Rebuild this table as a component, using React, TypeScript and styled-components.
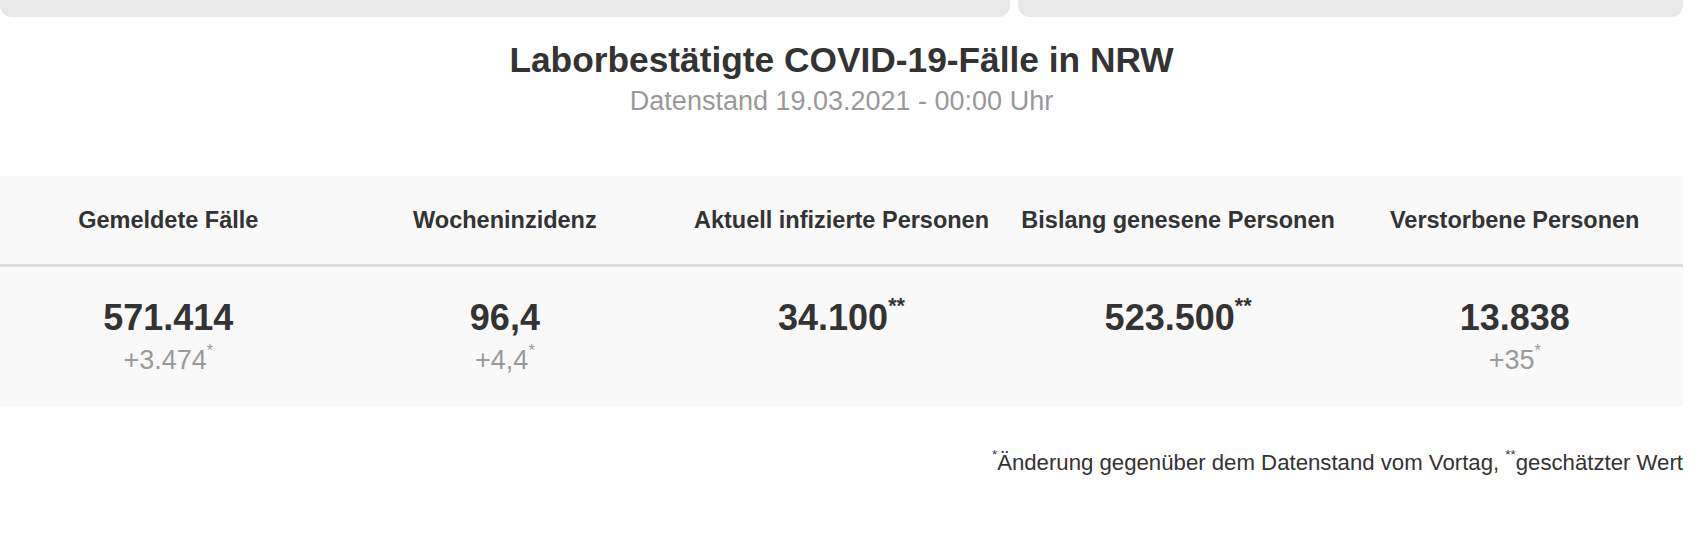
import React, { FunctionComponent } from 'react';
import styled, { createGlobalStyle } from 'styled-components';

const GlobalStyle = createGlobalStyle`
  html, body {
    margin: 0;
    padding: 0;
    background: #ffffff;
  }
  body {
    font-family: 'Liberation Sans', Arial, Helvetica, sans-serif;
    color: #333333;
  }
`;

const Page = styled.div`
  width: 1683px;
`;

const CardRow = styled.div`
  display: grid;
  grid-template-columns: 1010px 1fr;
  gap: 8px;
`;

const CardStub = styled.div`
  height: 17px;
  background: #e8e8e8;
  border-radius: 0 0 12px 12px;
`;

const Heading = styled.header`
  display: flex;
  flex-direction: column;
  align-items: center;
  gap: 5px;
  margin-top: 23px;
`;

const Title = styled.h1`
  margin: 0;
  font-size: 35.3px;
  line-height: 40px;
  font-weight: bold;
  color: #333333;
`;

const Subtitle = styled.div`
  font-size: 27px;
  line-height: 32px;
  color: #999999;
`;

const Table = styled.div`
  margin-top: 59px;
  background: #f9f9f9;
`;

const Row = styled.div<{ $head?: boolean }>`
  display: grid;
  grid-template-columns: repeat(5, 1fr);
  align-items: ${p => (p.$head ? 'center' : 'start')};
  padding: ${p => (p.$head ? '0' : '30px 0 0')};
  border-bottom: ${p => (p.$head ? '3px solid #dddddd' : 'none')};
  box-sizing: border-box;
  height: ${p => (p.$head ? '91px' : '139px')};
`;

const HeadCell = styled.div`
  text-align: center;
  font-size: 23.5px;
  line-height: 28px;
  font-weight: bold;
  color: #333333;
`;

const ValueCell = styled.div`
  display: flex;
  flex-direction: column;
  align-items: center;
  gap: 5px;
`;

const Value = styled.div`
  font-size: 36px;
  line-height: 42px;
  font-weight: bold;
  color: #333333;
`;

const Delta = styled.div`
  font-size: 27px;
  line-height: 32px;
  color: #999999;
`;

const Star = styled.sup`
  font-size: 0.6em;
  line-height: 0;
  vertical-align: 0.8em;
`;

const Footnote = styled.p`
  margin: 44px 0 0;
  text-align: right;
  font-size: 22.2px;
  line-height: 26px;
  color: #333333;
`;

type Stat = { label: string; value: string; stars?: string; delta?: string };

const stats: Stat[] = [
  { label: 'Gemeldete Fälle', value: '571.414', delta: '+3.474' },
  { label: 'Wocheninzidenz', value: '96,4', delta: '+4,4' },
  { label: 'Aktuell infizierte Personen', value: '34.100', stars: '**' },
  { label: 'Bislang genesene Personen', value: '523.500', stars: '**' },
  { label: 'Verstorbene Personen', value: '13.838', delta: '+35' },
];

const App: FunctionComponent = () => (
  <Page>
    <GlobalStyle />
    <CardRow>
      <CardStub />
      <CardStub />
    </CardRow>

    <Heading>
      <Title>Laborbestätigte COVID-19-Fälle in NRW</Title>
      <Subtitle>Datenstand 19.03.2021 - 00:00 Uhr</Subtitle>
    </Heading>

    <Table>
      <Row $head>
        {stats.map(s => (
          <HeadCell key={s.label}>{s.label}</HeadCell>
        ))}
      </Row>
      <Row>
        {stats.map(s => (
          <ValueCell key={s.label}>
            <Value>
              {s.value}
              {s.stars && <Star>{s.stars}</Star>}
            </Value>
            {s.delta && (
              <Delta>
                {s.delta}
                <Star>*</Star>
              </Delta>
            )}
          </ValueCell>
        ))}
      </Row>
    </Table>

    <Footnote>
      <Star>*</Star>Änderung gegenüber dem Datenstand vom Vortag, <Star>**</Star>geschätzter Wert
    </Footnote>
  </Page>
);

export default App;
